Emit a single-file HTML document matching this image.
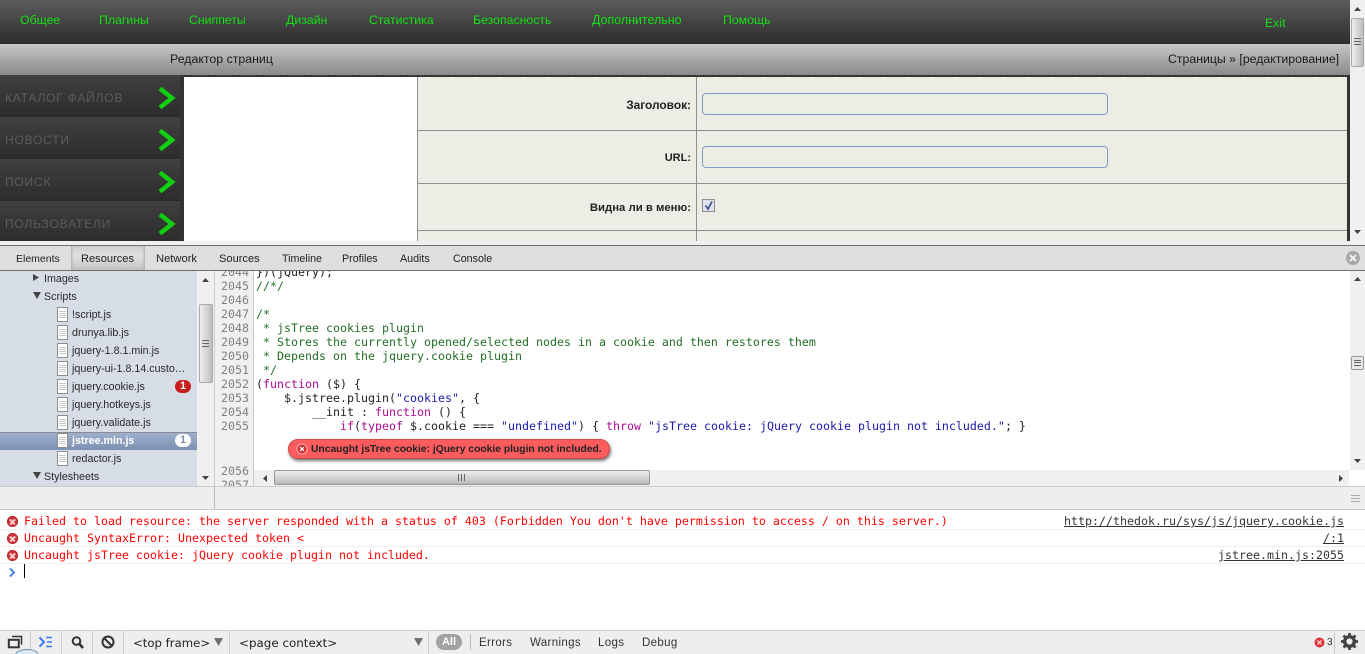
<!DOCTYPE html>
<html><head><meta charset="utf-8"><style>
html,body{margin:0;padding:0;width:1365px;height:654px;overflow:hidden;background:#fff}
body{position:relative;font-family:"Liberation Sans",sans-serif}
.a,.a *{box-sizing:border-box}
.a{position:absolute}
.t{position:absolute;white-space:pre;line-height:14px}
.nav{color:#14e014;font-size:12.3px;top:13px}
.side{left:0;width:180px;height:42px;background:linear-gradient(#404040,#2c2c2c)}
.side span{position:absolute;left:5px;top:16px;font-size:12px;letter-spacing:.8px;color:#5c5c5c;line-height:15px;white-space:pre}
.tab{top:252px;font-size:11.1px;color:#222}
.tree{font-size:10.7px;color:#2a2a2a;left:72px}
.file{position:absolute;box-sizing:border-box;left:57px;width:11px;height:15px;border:1px solid #8e8e8e;background:repeating-linear-gradient(#fff 0,#fff 1px,#c8c8c8 1px,#c8c8c8 2px) content-box,#fff;padding:2px 1px}
.ln{position:absolute;left:215px;width:34px;text-align:right;font:11.63px/14px "DejaVu Sans Mono",monospace;color:#808080}
.c{position:absolute;left:256px;font:11.63px/14px "DejaVu Sans Mono",monospace;color:#222;white-space:pre}
.g{color:#236e25}.p{color:#aa0d91}.s{color:#1a1aa6}
.e{position:absolute;left:24px;font:11.63px/14px "DejaVu Sans Mono",monospace;color:#f00;white-space:pre}
.u{position:absolute;font:11.63px/14px "DejaVu Sans Mono",monospace;color:#333;text-decoration:underline;white-space:pre}
.err{position:absolute;left:7px;width:11px;height:11px;border-radius:50%;background:#d8343a;box-shadow:inset 0 0 2px #811}
.err:before,.err:after{content:"";position:absolute;left:2px;top:5px;width:7px;height:1.5px;background:#f4d0d0;transform:rotate(45deg)}
.err:after{transform:rotate(-45deg)}
.sep{position:absolute;top:631px;width:1px;height:23px;background:#ccc}
.b{position:absolute;top:636px;font-size:11.5px;letter-spacing:.35px;color:#333;line-height:14px;white-space:pre}
.f{position:absolute;top:636px;font:11.7px/14px "DejaVu Sans",sans-serif;color:#222;white-space:pre}
.grip{position:absolute;width:7px;height:1px;background:#666}
.sbv{background:linear-gradient(90deg,#eee,#d2d2d2 60%,#bbb);border:1px solid #aaa;border-radius:2px}
</style></head><body>

<div class="a" style="left:0;top:0;width:1350px;height:44px;background:linear-gradient(#5c5c5c,#2c2c2c)"></div>
<div class="t nav" style="left:20px">Общее</div>
<div class="t nav" style="left:99px">Плагины</div>
<div class="t nav" style="left:189px">Сниппеты</div>
<div class="t nav" style="left:286px">Дизайн</div>
<div class="t nav" style="left:369px">Статистика</div>
<div class="t nav" style="left:473px">Безопасность</div>
<div class="t nav" style="left:592px;font-size:12.45px">Дополнительно</div>
<div class="t nav" style="left:723px">Помощь</div>
<div class="t nav" style="left:1265px;top:16px">Exit</div>

<div class="a" style="left:0;top:44px;width:1350px;height:31px;background:linear-gradient(#c6c6c6,#8a8a8a)"></div>
<div class="t" style="left:170px;top:52px;font-size:12.35px;color:#1a1a1a">Редактор страниц</div>
<div class="t" style="left:1168px;top:52px;font-size:12.3px;color:#1a1a1a">Страницы » [редактирование]</div>

<div class="a" style="left:0;top:75px;width:1350px;height:166px;background:#333"></div>
<div class="a" style="left:180px;top:75px;width:1170px;height:1px;background:repeating-linear-gradient(90deg,#5a5a5a 0,#5a5a5a 1px,#2a2a2a 1px,#2a2a2a 3px)"></div>
<div class="a side" style="top:75px"><span>КАТАЛОГ ФАЙЛОВ</span></div>
<div class="a side" style="top:117px"><span>НОВОСТИ</span></div>
<div class="a side" style="top:159px"><span>ПОИСК</span></div>
<div class="a side" style="top:201px;height:40px"><span>ПОЛЬЗОВАТЕЛИ</span></div>
<svg class="a" style="left:157px;top:85px" width="20" height="150" viewBox="0 0 20 150" fill="none" stroke="#10d010" stroke-width="4.5"><path d="M3 3.5L15 13 3 22.5"/><path d="M3 45.5L15 55 3 64.5"/><path d="M3 87.5L15 97 3 106.5"/><path d="M3 129.5L15 139 3 148.5"/></svg>

<div class="a" style="left:184px;top:77px;width:233px;height:164px;background:#fff"></div>
<div class="a" style="left:417px;top:77px;width:930px;height:164px;background:#eeede5;border-left:1px solid #8f8f8f"></div>
<div class="a" style="left:417px;top:130px;width:930px;height:1px;background:#8f8f8f"></div>
<div class="a" style="left:417px;top:183px;width:930px;height:1px;background:#8f8f8f"></div>
<div class="a" style="left:417px;top:230px;width:930px;height:1px;background:#8f8f8f"></div>
<div class="a" style="left:696px;top:77px;width:1px;height:164px;background:#8f8f8f"></div>
<div class="t" style="right:674px;top:98px;font-size:11.9px;font-weight:bold;color:#222">Заголовок:</div>
<div class="t" style="right:674px;top:151px;font-size:11px;font-weight:bold;color:#222">URL:</div>
<div class="t" style="right:674px;top:201px;font-size:11.35px;font-weight:bold;color:#222">Видна ли в меню:</div>
<div class="a" style="left:702px;top:93px;width:406px;height:22px;border:1px solid #7f9dc0;border-radius:4px"></div>
<div class="a" style="left:702px;top:146px;width:406px;height:22px;border:1px solid #7f9dc0;border-radius:4px"></div>
<div class="a" style="left:702px;top:199px;width:13px;height:13px;border:1px solid #8f8f8f;background:#dfe2ea"></div>
<svg class="a" style="left:702px;top:199px" width="13" height="13" fill="none" stroke="#4a5a9a" stroke-width="1.8"><path d="M3.5 6.5L6 10 10 2.5"/></svg>

<div class="a" style="left:1350px;top:0;width:15px;height:241px;background:#f0f0f0"></div>
<svg class="a" style="left:1350px;top:0" width="15" height="241" fill="#444"><path d="M4 11h7L7.5 7zM4 230h7L7.5 234z"/></svg>
<div class="a sbv" style="left:1351px;top:18px;width:13px;height:49px"></div>
<div class="grip" style="left:1354px;top:38px"></div><div class="grip" style="left:1354px;top:41px"></div><div class="grip" style="left:1354px;top:44px"></div>

<div class="a" style="left:0;top:241px;width:1365px;height:4px;background:#f0f0f0"></div>
<div class="a" style="left:0;top:245px;width:1365px;height:26px;background:#dedede;border-top:1px solid #6f6f6f;border-bottom:1px solid #6f6f6f"></div>
<div class="a" style="left:71px;top:246px;width:74px;height:24px;background:linear-gradient(#d0d0d0,#e0e0e0 40%,#c4c4c4);box-shadow:inset 2px 0 2px -1px #aaa,inset -2px 0 2px -1px #aaa"></div>
<div class="t tab" style="left:16px;font-size:10.5px">Elements</div>
<div class="t tab" style="left:81px">Resources</div>
<div class="t tab" style="left:156px;font-size:11.2px">Network</div>
<div class="t tab" style="left:219px">Sources</div>
<div class="t tab" style="left:282px;font-size:10.7px">Timeline</div>
<div class="t tab" style="left:342px;font-size:10.7px">Profiles</div>
<div class="t tab" style="left:400px;font-size:10.7px">Audits</div>
<div class="t tab" style="left:453px;font-size:10.7px">Console</div>
<svg class="a" style="left:1345px;top:250px" width="16" height="16"><circle cx="8" cy="8" r="7" fill="#a8a8a8"/><path d="M5 5l6 6M11 5l-6 6" stroke="#eee" stroke-width="2"/></svg>

<div class="a" style="left:0;top:271px;width:197px;height:215px;background:#d6dde6"></div>
<div class="a" style="left:197px;top:271px;width:18px;height:215px;background:#f0f0f0;border-right:1px solid #ccc"></div>
<svg class="a" style="left:197px;top:271px" width="17" height="215" fill="#444"><path d="M5 11h7L8.500 7zM5 205h7L8.500 209z"/></svg>
<div class="a sbv" style="left:199px;top:304px;width:14px;height:79px"></div>
<div class="grip" style="left:202px;top:340px"></div><div class="grip" style="left:202px;top:343px"></div><div class="grip" style="left:202px;top:346px"></div>

<div class="a" style="left:0;top:432px;width:197px;height:18px;background:linear-gradient(#9fb0cc,#7c8fb2);border-top:1px solid #8a8a9a"></div>
<svg class="a" style="left:30px;top:272px" width="14" height="210" fill="#444"><path d="M3 2v7l6-3.500zM3 20h8l-4 7zM3 200h8l-4 7z"/></svg>
<div class="t tree" style="left:44px;top:272px">Images</div>
<div class="t tree" style="left:44px;top:290px">Scripts</div>
<div class="file" style="top:307px"></div><div class="t tree" style="top:308px">!script.js</div>
<div class="file" style="top:325px"></div><div class="t tree" style="top:326px">drunya.lib.js</div>
<div class="file" style="top:343px"></div><div class="t tree" style="top:344px">jquery-1.8.1.min.js</div>
<div class="file" style="top:361px"></div><div class="t tree" style="top:362px">jquery-ui-1.8.14.custo…</div>
<div class="file" style="top:379px"></div><div class="t tree" style="top:380px">jquery.cookie.js</div>
<div class="file" style="top:397px"></div><div class="t tree" style="top:398px">jquery.hotkeys.js</div>
<div class="file" style="top:415px"></div><div class="t tree" style="top:416px">jquery.validate.js</div>
<div class="file" style="top:433px"></div><div class="t tree" style="top:434px;color:#fff;font-weight:bold">jstree.min.js</div>
<div class="file" style="top:451px"></div><div class="t tree" style="top:452px">redactor.js</div>
<div class="t tree" style="left:44px;top:470px">Stylesheets</div>
<div class="a" style="left:175px;top:380px;width:16px;height:13px;border-radius:7px;background:#c81e1e;color:#fff;font:bold 11px/13px 'Liberation Sans',sans-serif;text-align:center">1</div>
<div class="a" style="left:175px;top:434px;width:16px;height:13px;border-radius:7px;background:#fff;color:#7c8fb2;font:bold 11px/13px 'Liberation Sans',sans-serif;text-align:center">1</div>

<div class="a" style="left:215px;top:271px;width:1135px;height:199px;overflow:hidden">
  <div class="a" style="left:0;top:0;width:39px;height:215px;background:#f0f0f0;border-right:1px solid #c8c8c8"></div>
</div>
<div class="a" style="left:215px;top:470px;width:39px;height:16px;background:#f0f0f0;border-right:1px solid #c8c8c8;overflow:hidden"><div class="ln" style="left:0;top:8px">2057</div></div>
<div class="ln" style="top:265px;clip-path:inset(6px 0 0 0)">2044</div>
<div class="ln" style="top:279px">2045</div>
<div class="ln" style="top:293px">2046</div>
<div class="ln" style="top:307px">2047</div>
<div class="ln" style="top:321px">2048</div>
<div class="ln" style="top:335px">2049</div>
<div class="ln" style="top:349px">2050</div>
<div class="ln" style="top:363px">2051</div>
<div class="ln" style="top:377px">2052</div>
<div class="ln" style="top:391px">2053</div>
<div class="ln" style="top:405px">2054</div>
<div class="ln" style="top:419px">2055</div>
<div class="ln" style="top:464px">2056</div>
<div class="c" style="top:265px;clip-path:inset(6px 0 0 0)">})(jQuery);</div>
<div class="c g" style="top:279px">//*/</div>
<div class="c g" style="top:307px">/*</div>
<div class="c g" style="top:321px"> * jsTree cookies plugin</div>
<div class="c g" style="top:335px"> * Stores the currently opened/selected nodes in a cookie and then restores them</div>
<div class="c g" style="top:349px"> * Depends on the jquery.cookie plugin</div>
<div class="c g" style="top:363px"> */</div>
<div class="c" style="top:377px">(<span class="p">function</span> ($) {</div>
<div class="c" style="top:391px">    $.jstree.plugin(<span class="s">"cookies"</span>, {</div>
<div class="c" style="top:405px">        __init : <span class="p">function</span> () {</div>
<div class="c" style="top:419px">            <span class="p">if</span>(<span class="p">typeof</span> $.cookie === <span class="s">"undefined"</span>) { <span class="p">throw</span> <span class="s">"jsTree cookie: jQuery cookie plugin not included."</span>; }</div>

<div class="a" style="left:288px;top:439px;width:322px;height:20px;border-radius:10px;background:#fd5c5f;border:1px solid #d04a4a;box-shadow:1px 2px 3px rgba(0,0,0,.55)"></div>
<svg class="a" style="left:296px;top:443px" width="12" height="12"><circle cx="6" cy="6" r="5" fill="#d3282c" stroke="#f8b0b0"/><path d="M4 4l4 4M8 4l-4 4" stroke="#fff" stroke-width="1.3"/></svg>
<div class="t" style="left:311px;top:443px;font-size:10.3px;font-weight:bold;color:#222">Uncaught jsTree cookie: jQuery cookie plugin not included.</div>

<div class="a" style="left:1350px;top:271px;width:15px;height:199px;background:#f0f0f0"></div>
<svg class="a" style="left:1350px;top:271px" width="15" height="199" fill="#444"><path d="M4 10h7L7.500 6zM4 188h7L7.500 192z"/></svg>
<div class="a" style="left:1351px;top:356px;width:13px;height:14px;background:#e8e8e8;border:1px solid #999;border-radius:2px"></div>
<div class="grip" style="left:1354px;top:360px"></div><div class="grip" style="left:1354px;top:362px"></div><div class="grip" style="left:1354px;top:365px"></div>

<div class="a" style="left:254px;top:470px;width:1095px;height:16px;background:#f0f0f0"></div>
<svg class="a" style="left:254px;top:470px" width="1095" height="16" fill="#444"><path d="M13 5v7l-4-3.500zM1085 5v7l4-3.500z"/></svg>
<div class="a" style="left:274px;top:470px;width:376px;height:15px;border:1px solid #999;border-radius:2px;background:linear-gradient(#eee,#d0d0d0 60%,#b8b8b8)"></div>
<div class="a" style="left:458px;top:474px;width:1px;height:7px;background:#666;box-shadow:3px 0 #666,6px 0 #666"></div>

<div class="a" style="left:0;top:486px;width:1365px;height:24px;background:#eee;border-top:1px solid #ccc;border-bottom:1px solid #ccc"></div>
<div class="a" style="left:214px;top:486px;width:1px;height:23px;background:#bbb"></div>
<div class="a" style="left:1351px;top:495px;width:9px;height:1px;background:#aaa;box-shadow:0 3px #aaa,0 6px #aaa"></div>

<div class="a" style="left:0;top:529px;width:1365px;height:1px;background:#efefef"></div>
<div class="a" style="left:0;top:546px;width:1365px;height:1px;background:#efefef"></div>
<div class="a" style="left:0;top:563px;width:1365px;height:1px;background:#efefef"></div>
<div class="err" style="top:516px"></div><div class="err" style="top:533px"></div><div class="err" style="top:550px"></div>
<div class="e" style="top:514px">Failed to load resource: the server responded with a status of 403 (Forbidden You don't have permission to access / on this server.)</div>
<div class="e" style="top:531px">Uncaught SyntaxError: Unexpected token &lt;</div>
<div class="e" style="top:548px">Uncaught jsTree cookie: jQuery cookie plugin not included.</div>
<div class="u" style="left:1064px;top:514px">http://thedok.ru/sys/js/jquery.cookie.js</div>
<div class="u" style="left:1323px;top:531px">/:1</div>
<div class="u" style="left:1218px;top:548px">jstree.min.js:2055</div>
<svg class="a" style="left:8px;top:567px" width="9" height="11" fill="none" stroke="#4a86e8" stroke-width="2"><path d="M2 1.500L6 5.500 2 9.500"/></svg>
<div class="a" style="left:24px;top:564px;width:1px;height:14px;background:#000"></div>

<div class="a" style="left:0;top:630px;width:1365px;height:24px;background:#eee;border-top:1px solid #ccc"></div>
<div class="sep" style="left:30px"></div><div class="sep" style="left:61px"></div><div class="sep" style="left:92px"></div><div class="sep" style="left:123px"></div><div class="sep" style="left:229px"></div><div class="sep" style="left:428px"></div><div class="sep" style="left:1334px"></div>
<div class="a" style="left:470px;top:634px;width:1px;height:16px;background:#bbb"></div>
<svg class="a" style="left:0;top:631px" width="125" height="23" fill="none" stroke="#333">
  <path d="M12 5.500h9.500v8" stroke-width="1.500"/><rect x="8.800" y="8.800" width="10" height="7.500" stroke-width="2"/>
  <path d="M39.500 6.500l4.500 4.500-4.500 4.500" stroke="#3b7be8" stroke-width="2"/><path d="M46 6.500h6M47 11h5M46 15.500h6" stroke="#3b7be8" stroke-width="1.600"/>
  <circle cx="76.500" cy="10" r="3.800" stroke-width="2"/><path d="M79.500 13l3.500 4" stroke-width="2.600"/>
  <circle cx="108" cy="11" r="5.500" stroke-width="2"/><path d="M104 7l8 8" stroke-width="2"/>
</svg>
<div class="a" style="left:15px;top:649px;width:24px;height:12px;border-radius:50%;border:1px solid #6f93b0;background:#dbe7f2"></div>
<div class="f" style="left:133px">&lt;top frame&gt;</div>
<div class="f" style="left:239px;font-size:11.9px">&lt;page context&gt;</div>
<svg class="a" style="left:213px;top:637px" width="215" height="11" fill="#6f7178"><path d="M1 1h9L5.500 9zM201 1h9L205.500 9z"/></svg>
<div class="a" style="left:436px;top:634px;width:26px;height:16px;border-radius:8px;background:#a2a2a2;color:#fff;font:bold 11px/16px 'Liberation Sans',sans-serif;text-align:center">All</div>
<div class="b" style="left:479px">Errors</div>
<div class="b" style="left:530px">Warnings</div>
<div class="b" style="left:598px">Logs</div>
<div class="b" style="left:642px">Debug</div>
<svg class="a" style="left:1314px;top:637px" width="11" height="11"><circle cx="5.500" cy="5.500" r="5" fill="#e0343c"/><path d="M3.500 3.500l4 4M7.500 3.500l-4 4" stroke="#f8d0d0" stroke-width="1.300"/></svg>
<div class="t" style="left:1327px;top:636px;font-size:10px;color:#333">3</div>
<svg class="a" style="left:1341px;top:633px" width="17" height="17"><circle cx="8.500" cy="8.500" r="4.800" fill="none" stroke="#444" stroke-width="3.400"/><path d="M8.500 0v17M0 8.500h17M2.500 2.500l12 12M14.500 2.500l-12 12" stroke="#444" stroke-width="2.800" stroke-dasharray="3.200 10.600"/></svg>
</body></html>
